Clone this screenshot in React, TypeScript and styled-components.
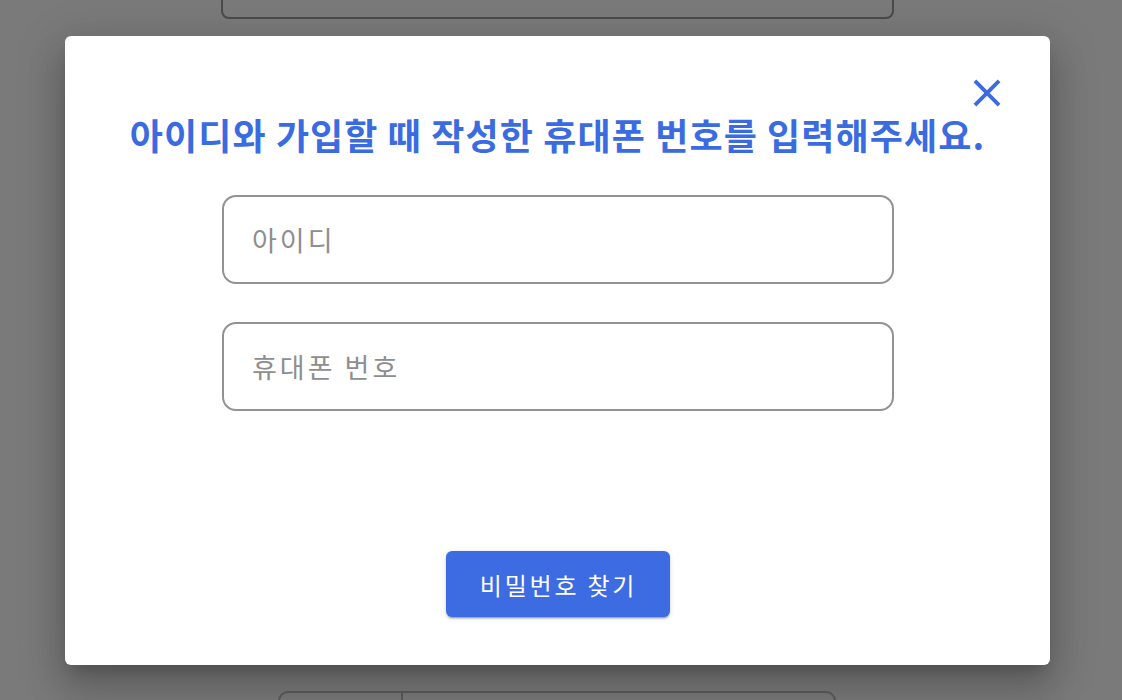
import styled, { createGlobalStyle } from 'styled-components';

const GlobalStyle = createGlobalStyle`
  html, body {
    margin: 0;
    padding: 0;
    height: 100%;
    overflow: hidden;
  }
  body {
    background: #ffffff;
    font-family: "Noto Sans CJK KR", "Noto Sans", sans-serif;
  }
`;

const Page = styled.div`
  position: relative;
  width: 1122px;
  height: 700px;
  display: flex;
  flex-direction: column;
  justify-content: space-between;
  align-items: flex-start;
  overflow: hidden;
  background: #f4f4f4;
`;

const TopCard = styled.div`
  width: 669px;
  height: 60px;
  margin: -45px 0 0 221px;
  border: 2px solid #959595;
  border-radius: 8px;
  background: #f4f4f4;
`;

const BottomBar = styled.div`
  width: 554px;
  height: 40px;
  margin: 0 0 -35px 278px;
  display: flex;
  border: 2px solid #b8b8b8;
  border-radius: 10px;
  background: #f4f4f4;
`;

const BarCell = styled.div<{ $w?: number }>`
  width: ${(p) => (p.$w ? `${p.$w}px` : 'auto')};
  flex: ${(p) => (p.$w ? 'none' : 1)};
  border-right: ${(p) => (p.$w ? '2px solid #b8b8b8' : 'none')};
`;

const Backdrop = styled.div`
  position: absolute;
  inset: 0;
  background: rgba(0, 0, 0, 0.5);
`;

const Modal = styled.div`
  position: absolute;
  left: 65px;
  top: 36px;
  width: 985px;
  height: 629px;
  box-sizing: border-box;
  background: #ffffff;
  border-radius: 6px;
  box-shadow: 0 11px 15px -7px rgba(0, 0, 0, 0.2), 0 24px 38px 3px rgba(0, 0, 0, 0.14),
    0 9px 46px 8px rgba(0, 0, 0, 0.12);
  display: flex;
  flex-direction: column;
  align-items: center;
  padding: 74px 0 48px;
`;

const CloseButton = styled.button`
  position: absolute;
  top: 34px;
  right: 40px;
  width: 46px;
  height: 46px;
  padding: 0;
  border: none;
  background: transparent;
  color: #3b6be0;
  cursor: pointer;
  svg {
    display: block;
  }
`;

const Title = styled.h2`
  margin: 0;
  font-size: 36px;
  line-height: 48px;
  font-weight: 700;
  color: #3b6be0;
  letter-spacing: 1.1px;
`;

const Form = styled.div`
  margin-top: 37px;
  display: flex;
  flex-direction: column;
  gap: 38px;
  margin-left: 1px;
`;

const Input = styled.input`
  width: 672px;
  height: 89px;
  box-sizing: border-box;
  border: 2px solid #929292;
  border-radius: 14px;
  padding: 0 28px;
  font-family: inherit;
  font-size: 27px;
  letter-spacing: 3px;
  color: #333;
  outline: none;
  &::placeholder {
    color: #8e8e8e;
  }
`;

const Spacer = styled.div`
  flex: 1;
`;

const SubmitButton = styled.button`
  width: 224px;
  height: 66px;
  margin-left: 1px;
  padding: 0 0 0 1px;
  border: none;
  border-radius: 6px;
  background: #3d6ce2;
  color: #ffffff;
  font-family: inherit;
  font-size: 24px;
  letter-spacing: 2.8px;
  box-shadow: 0 3px 1px -2px rgba(0, 0, 0, 0.2), 0 2px 2px 0 rgba(0, 0, 0, 0.14),
    0 1px 5px 0 rgba(0, 0, 0, 0.12);
  cursor: pointer;
`;

const CloseIcon = () => (
  <svg width="46" height="46" viewBox="0 0 24 24" fill="currentColor">
    <path d="M19 6.41 17.59 5 12 10.59 6.41 5 5 6.41 10.59 12 5 17.59 6.41 19 12 13.41 17.59 19 19 17.59 13.41 12z" />
  </svg>
);

const App = () => {
  return (
    <>
      <GlobalStyle />
      <Page>
        <TopCard />
        <BottomBar>
          <BarCell $w={121} />
          <BarCell />
        </BottomBar>
        <Backdrop />
        <Modal>
          <CloseButton aria-label="닫기">
            <CloseIcon />
          </CloseButton>
          <Title>아이디와 가입할 때 작성한 휴대폰 번호를 입력해주세요.</Title>
          <Form>
            <Input placeholder="아이디" />
            <Input placeholder="휴대폰 번호" />
          </Form>
          <Spacer />
          <SubmitButton>비밀번호 찾기</SubmitButton>
        </Modal>
      </Page>
    </>
  );
};

export default App;
